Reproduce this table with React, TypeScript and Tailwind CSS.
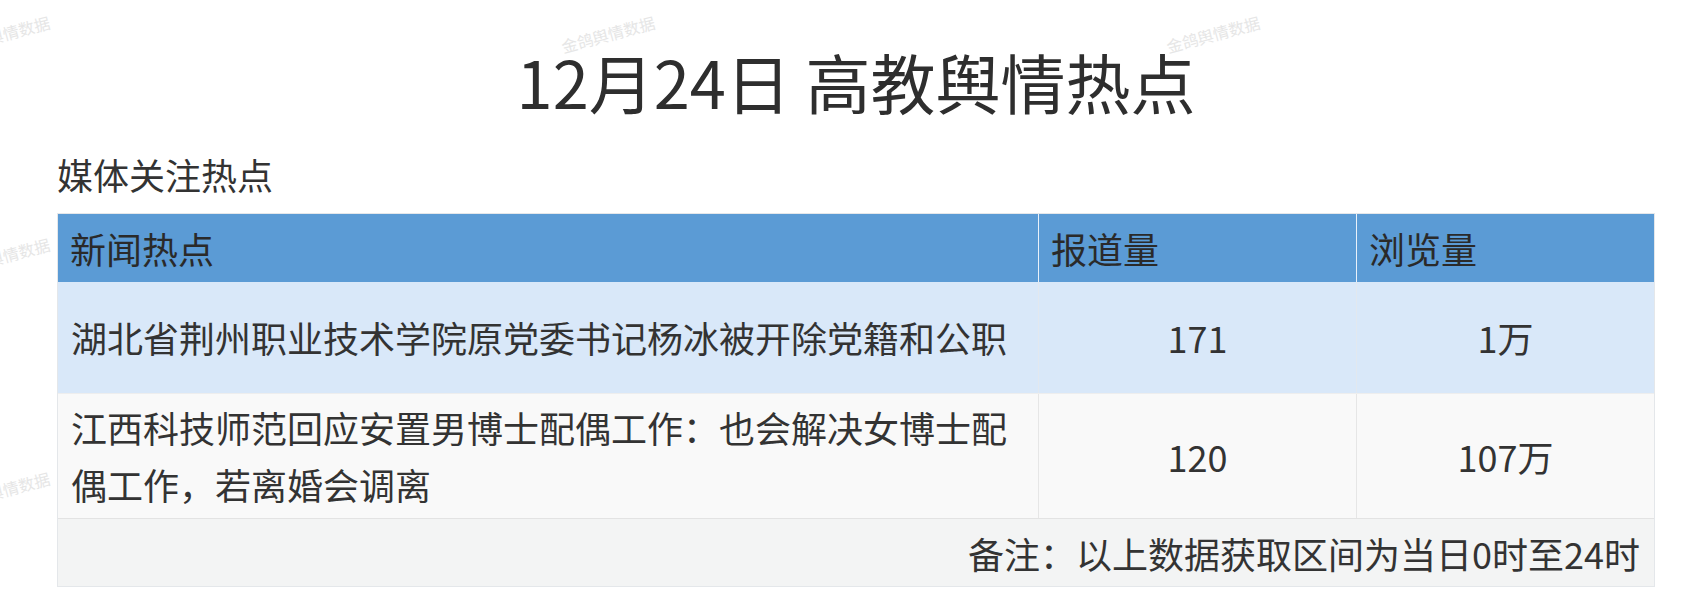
import React from "react";

const FONT = {
  fontFamily: '"Noto Sans CJK SC", "Noto Sans", sans-serif',
};

function Watermark({ className }: { className: string }) {
  return (
    <div
      className={`absolute whitespace-nowrap text-[16px] leading-[20px] text-[#e6e6e6] -rotate-[15deg] select-none ${className}`}
    >
      金鸽舆情数据
    </div>
  );
}

export default function App() {
  return (
    <div
      className="relative w-full h-[614px] bg-white overflow-hidden text-[#333333]"
      style={FONT}
    >
      <Watermark className="left-[-45px] top-[24px]" />
      <Watermark className="left-[560px] top-[24px]" />
      <Watermark className="left-[1165px] top-[24px]" />
      <Watermark className="left-[-45px] top-[246px]" />
      <Watermark className="left-[-45px] top-[480px]" />

      <div className="relative pl-[57px] pr-[51px] pt-[41px]">
        <div className="h-[80px] leading-[80px] text-[65px] text-center text-[#2e2e2e]">
          12月24日 高教舆情热点
        </div>
        <div className="mt-[33px] h-[40px] leading-[40px] text-[36px]">
          媒体关注热点
        </div>

        <div className="mt-[19px] border border-[#e4e7ea] text-[36px]">
          {/* header */}
          <div className="flex h-[68px] bg-[#5b9bd5] text-[#2a2a2a]">
            <div className="w-[980px] flex items-center px-[12px] leading-[40px]">
              新闻热点
            </div>
            <div className="w-[318px] flex items-center px-[12px] border-l border-[#e9f1fa] leading-[40px]">
              报道量
            </div>
            <div className="flex-1 flex items-center px-[12px] border-l border-[#e9f1fa] leading-[40px]">
              浏览量
            </div>
          </div>

          {/* row 1 */}
          <div className="flex h-[111px] bg-[#d9e8f9]">
            <div className="w-[980px] flex items-center px-[13px] leading-[57px]">
              湖北省荆州职业技术学院原党委书记杨冰被开除党籍和公职
            </div>
            <div className="w-[318px] flex items-center justify-center border-l border-[#e2e8ef] leading-[57px]">
              171
            </div>
            <div className="flex-1 flex items-center justify-center border-l border-[#e2e8ef] leading-[57px]">
              1万
            </div>
          </div>

          {/* row 2 */}
          <div className="flex h-[125px] bg-[#f9f9f9] border-t border-[#eeeeee]">
            <div className="w-[980px] flex items-center px-[13px] leading-[57px]">
              江西科技师范回应安置男博士配偶工作：也会解决女博士配偶工作，若离婚会调离
            </div>
            <div className="w-[318px] flex items-center justify-center border-l border-[#e6e6e6] leading-[57px]">
              120
            </div>
            <div className="flex-1 flex items-center justify-center border-l border-[#e6e6e6] leading-[57px]">
              107万
            </div>
          </div>

          {/* footer */}
          <div className="flex h-[68px] items-center justify-end bg-[#f3f4f4] border-t border-[#e3e3e3] pr-[14px] leading-[40px]">
            备注：以上数据获取区间为当日0时至24时
          </div>
        </div>
      </div>
    </div>
  );
}
